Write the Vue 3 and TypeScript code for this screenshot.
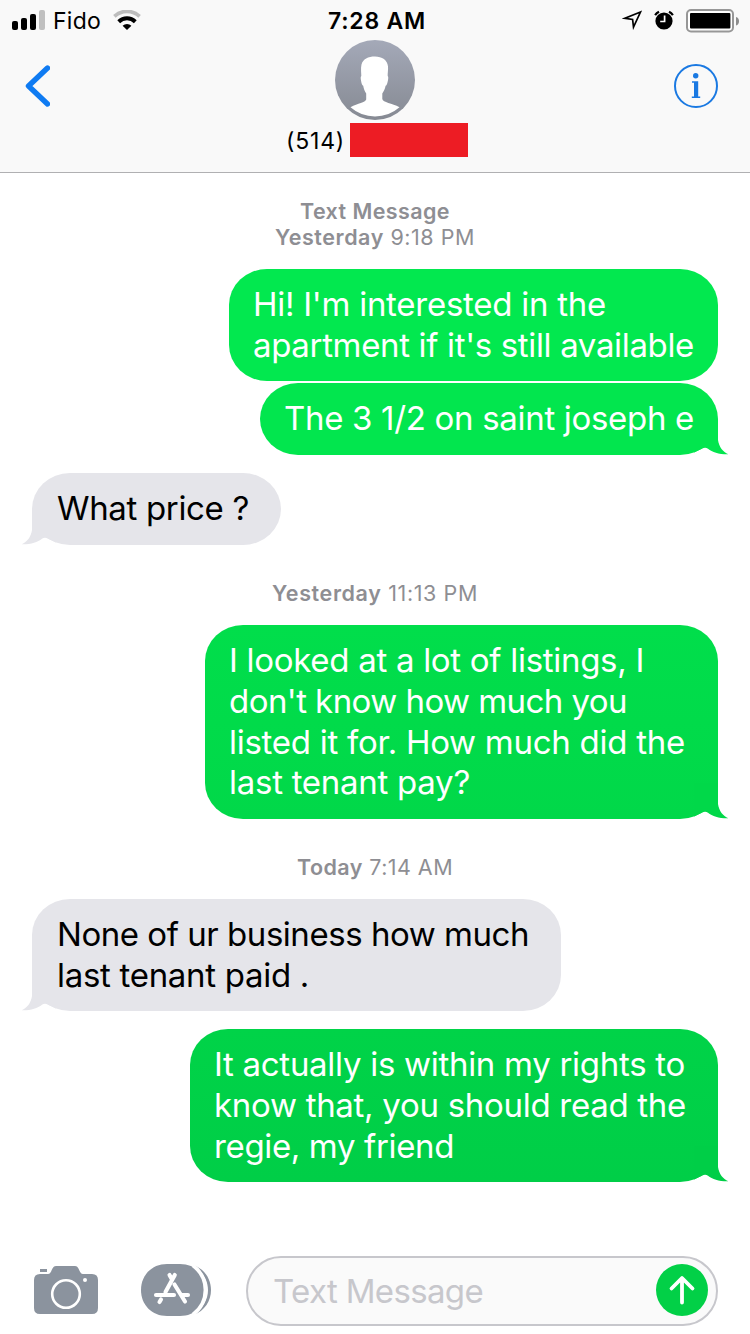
<script setup lang="ts">
interface Line {
  text: string
  width: number
}

interface Bubble {
  id: string
  kind: 'sent' | 'received'
  tail: boolean
  lines: Line[]
}

interface Group {
  id: string
  stamp: { label?: string; day: string; time: string; width: number }
  bubbles: Bubble[]
}

const groups: Group[] = [
  {
    id: 'first',
    stamp: { label: 'Text Message', day: 'Yesterday', time: '9:18 PM', width: 200 },
    bubbles: [
      {
        id: 'hello',
        kind: 'sent',
        tail: false,
        lines: [
          { text: "Hi! I'm interested in the", width: 353 },
          { text: "apartment if it's still available", width: 441 },
        ],
      },
      {
        id: 'street',
        kind: 'sent',
        tail: true,
        lines: [{ text: 'The 3 1/2 on saint joseph e', width: 410 }],
      },
      {
        id: 'price',
        kind: 'received',
        tail: true,
        lines: [{ text: 'What price ?', width: 192 }],
      },
    ],
  },
  {
    id: 'second',
    stamp: { day: 'Yesterday', time: '11:13 PM', width: 206 },
    bubbles: [
      {
        id: 'listings',
        kind: 'sent',
        tail: true,
        lines: [
          { text: 'I looked at a lot of listings, I', width: 415 },
          { text: "don't know how much you", width: 398 },
          { text: 'listed it for. How much did the', width: 456 },
          { text: 'last tenant pay?', width: 241 },
        ],
      },
    ],
  },
  {
    id: 'third',
    stamp: { day: 'Today', time: '7:14 AM', width: 156 },
    bubbles: [
      {
        id: 'business',
        kind: 'received',
        tail: true,
        lines: [
          { text: 'None of ur business how much', width: 472 },
          { text: 'last tenant paid .', width: 252 },
        ],
      },
      {
        id: 'rights',
        kind: 'sent',
        tail: true,
        lines: [
          { text: 'It actually is within my rights to', width: 471 },
          { text: 'know that, you should read the', width: 472 },
          { text: 'regie, my friend', width: 240 },
        ],
      },
    ],
  },
]

// Tracks a single line of text so that it spans the given width.
const vFit = {
  mounted(el: HTMLElement, binding: { value: number }) {
    const natural = el.getBoundingClientRect().width
    const count = (el.textContent ?? '').length
    if (count > 0) {
      el.style.letterSpacing = `${((binding.value - natural) / count).toFixed(3)}px`
    }
  },
}
</script>

<template>
  <main class="phone">
    <header class="top">
      <div class="status">
        <div class="carrier">
          <svg class="signal" width="34" height="20" viewBox="0 0 34 20">
            <rect x="0" y="11" width="6" height="9" rx="2" />
            <rect x="9" y="8" width="6" height="12" rx="2" />
            <rect x="18" y="4" width="6" height="16" rx="2" />
            <rect x="27" y="0" width="6" height="20" rx="2" fill="#bfbfbf" />
          </svg>
          <span v-fit="48" class="fido">Fido</span>
          <svg class="wifi" width="28" height="20" viewBox="0 0 28 20">
            <path d="M1.4 6.4A18.2 18.2 0 0 1 26.6 6.4" fill="none" stroke="#bdbdbd" stroke-width="3.6" />
            <path d="M5.700 11.700A12 12 0 0 1 22.300 11.700" fill="none" stroke="#000" stroke-width="4" />
            <path d="M9.600 15.700A6.800 6.800 0 0 1 18.400 15.700L14 20Z" />
          </svg>
        </div>
        <span v-fit="98" class="clock">7:28 AM</span>
        <div class="indicators">
          <svg width="20" height="20" viewBox="0 0 20 20">
            <path d="M18.500 2L3 8.300L10.600 9.500L11.500 17.100Z" fill="none" stroke="#000" stroke-width="1.7" />
          </svg>
          <svg class="alarm" width="20" height="20" viewBox="0 0 20 20">
            <circle cx="10" cy="11" r="8.6" />
            <path d="M1.1 5.1A11 11 0 0 1 5 1.7M18.9 5.1A11 11 0 0 0 15 1.7" fill="none" stroke="#000" stroke-width="2.2" />
            <path d="M10.6 5.4V11.5H6.2" fill="none" stroke="#fff" stroke-width="1.7" />
          </svg>
          <svg class="battery" width="54" height="24" viewBox="0 0 54 24">
            <rect x="1" y="1" width="46" height="21.5" rx="4" fill="#fff" stroke="#979797" stroke-width="2" />
            <rect x="4" y="4" width="40.4" height="15.4" rx="1" />
            <path d="M50 8C54 9 54 15.500 50 16.500Z" fill="#8d8d8d" />
          </svg>
        </div>
      </div>
      <nav class="contact">
        <svg class="back" width="26" height="44" viewBox="0 0 26 44">
          <path d="M23.500 4L4.500 22L23.500 40" fill="none" stroke="#0f7bf2" stroke-width="5.4" stroke-linecap="round" stroke-linejoin="round" />
        </svg>
        <div class="person">
          <svg width="80" height="80" viewBox="0 0 80 80">
            <defs>
              <linearGradient id="avatar-shade" x1="0" y1="0" x2="0" y2="1">
                <stop offset="0" stop-color="#a4a9b8" />
                <stop offset="1" stop-color="#868a93" />
              </linearGradient>
            </defs>
            <circle cx="40" cy="40" r="40" fill="url(#avatar-shade)" />
            <path
              d="M40 16.500C47 16.500 52.500 20 53 26.500C53.300 30 52.500 33.500 52.700 36C53.600 36.500 53.300 39 52.700 41.500C52.200 44 51.500 45.600 50.600 45.800C50 49 48.800 51.500 47.300 53.500V59C48 62.500 57 63.300 64.500 67.200Q54 76.400 40 76.400Q26 76.400 15.500 67.200C23 63.300 30.200 62.500 31.200 59.500V53.500C29.700 51.500 28.800 49 28.200 45.800C27.200 45.500 26.500 43.500 26.100 41C25.600 38.500 25.500 36.500 26.300 36C26.300 33 25.600 28.500 26.500 24.500C28 19 33 16.500 40 16.500Z"
              fill="#fff"
            />
          </svg>
          <div class="number">
            <span v-fit="59" class="area">(514)</span>
            <span class="redacted"></span>
          </div>
        </div>
        <svg class="info" width="44" height="44" viewBox="0 0 44 44">
          <circle cx="22" cy="22" r="21" fill="none" stroke="#1a79e2" stroke-width="2" />
          <circle cx="21.700" cy="11.700" r="2.700" fill="#1a79e2" />
          <path d="M18 17.200H24.200V32.500H26.200V34H17.800V32.500H20V18.700H18Z" fill="#1a79e2" />
        </svg>
      </nav>
    </header>

    <section class="chat">
      <template v-for="group in groups" :key="group.id">
        <div class="stamp" :class="'stamp-' + group.id">
          <b v-if="group.stamp.label" v-fit="150">{{ group.stamp.label }}</b>
          <span v-fit="group.stamp.width"><b>{{ group.stamp.day }}</b> {{ group.stamp.time }}</span>
        </div>
        <div
          v-for="bubble in group.bubbles"
          :key="bubble.id"
          class="bubble"
          :class="[bubble.kind, bubble.id]"
        >
          <span v-for="line in bubble.lines" :key="line.text" class="line">
            <span v-fit="line.width" class="words">{{ line.text }}</span>
          </span>
          <svg v-if="bubble.tail" class="tail" width="40" height="36" viewBox="0 0 40 36">
            <path d="M29 0V21C30 28 34 33 39.300 35.300C30 35.500 23.500 33 19 29.700Q16 28 13 29.800L5 33.600V0Z" />
          </svg>
        </div>
      </template>
    </section>

    <footer class="composer">
      <svg class="camera" width="64" height="48" viewBox="0 0 64 48">
        <path d="M6 3H13V6H6Z" />
        <path d="M6 8H14C18 8 17.500 0 22 0H41C45.500 0 45 8 49 8H58Q64 8 64 14V42Q64 48 58 48H6Q0 48 0 42V14Q0 8 6 8Z" />
        <circle cx="32" cy="28" r="13.800" fill="none" stroke="#fff" stroke-width="2.600" />
        <circle cx="51" cy="14" r="2" fill="#fff" />
      </svg>
      <svg class="apps" width="70" height="52" viewBox="0 0 70 52">
        <path d="M52 1C76 9 76 43 52 51C72 38 72 14 52 1Z" />
        <path d="M26 0H39C54 0 65 11 65 26S54 52 39 52H26C11 52 0 41 0 26S11 0 26 0Z" />
        <path d="M52 1.500C68.500 14 68.500 38 52 50.500" fill="none" stroke="#fff" stroke-width="3.600" />
        <path d="M33.800 11L24.500 28M28.500 11L31 15.500M33.500 20.500L44 37.500M15 31H33M41 31H47M20 35.500L18.500 38" fill="none" stroke="#fff" stroke-width="4.100" stroke-linecap="round" />
      </svg>
      <div class="field">
        <span v-fit="210" class="placeholder">Text Message</span>
        <svg class="send" width="52" height="52" viewBox="0 0 52 52">
          <circle cx="26" cy="26" r="26" fill="#02d047" />
          <path d="M26 38.500V14.500M15.500 24.500L26 14L36.500 24.500" fill="none" stroke="#fff" stroke-width="3.800" stroke-linecap="round" stroke-linejoin="round" />
        </svg>
      </div>
    </footer>
  </main>
</template>

<style>
body {
  margin: 0;
  background: #fff;
}
</style>

<style scoped>
.phone {
  display: flex;
  flex-direction: column;
  width: 750px;
  height: 1334px;
  overflow: hidden;
  background: #fff;
  color: #000;
  font-family: Inter, "Liberation Sans", sans-serif;
  white-space: nowrap;
}

svg {
  display: block;
  flex: none;
}

.top {
  box-sizing: border-box;
  height: 173px;
  flex: none;
  background: #f9f9f9;
  border-bottom: 1px solid #b0b0b2;
}

.status {
  display: grid;
  grid-template-columns: 1fr auto 1fr;
  align-items: center;
  height: 40px;
  padding: 0 10px 0 12px;
}

.carrier {
  display: flex;
  align-items: center;
}

.fido {
  margin-left: 7px;
  font-size: 23px;
  line-height: 38px;
  padding-top: 2px;
}

.wifi {
  margin-left: 12px;
}

.clock {
  margin-left: 2px;
  font-size: 23px;
  font-weight: 600;
  line-height: 38px;
  padding-top: 2px;
}

.indicators {
  display: flex;
  align-items: center;
  justify-content: flex-end;
}

.alarm {
  margin-left: 12px;
}

.battery {
  margin: 1px 0 0 12px;
}

.contact {
  display: grid;
  grid-template-columns: 1fr auto 1fr;
  align-items: start;
  padding: 0 32px 0 24px;
}

.back {
  margin-top: 24px;
}

.person {
  display: flex;
  flex-direction: column;
  align-items: center;
  width: 182px;
  margin-left: 8px;
}

.number {
  display: flex;
  align-items: center;
  justify-content: space-between;
  width: 182px;
  height: 34px;
  margin: 3px 0 0 4px;
  font-size: 23px;
}

.area {
  padding-top: 2px;
}

.redacted {
  width: 118px;
  height: 34px;
  background: #ed1c24;
}

.info {
  justify-self: end;
  margin-top: 24px;
}

.chat {
  display: flex;
  flex-direction: column;
  flex: 1;
  padding: 0 32px;
}

.stamp {
  display: flex;
  flex-direction: column;
  align-items: center;
  color: #8e8e93;
  font-size: 21.5px;
  line-height: 26px;
}

.stamp b {
  font-weight: 600;
}

.stamp-first {
  margin: 25px 0 19px;
}

.stamp-second {
  margin: 35px 0 19px;
}

.stamp-third {
  margin: 35px 0 19px;
}

.bubble {
  position: relative;
  box-sizing: border-box;
  padding: 15px 24px 0;
  border-radius: 38px / 36px;
  font-size: 33px;
  line-height: 40.8px;
}

.line {
  display: block;
}

.words {
  display: inline-block;
}

.sent {
  align-self: flex-end;
  color: #fff;
  font-weight: 400;
}

.received {
  align-self: flex-start;
  padding-left: 25px;
  background: #e5e5ea;
}

.tail {
  position: absolute;
  right: -11px;
  bottom: 0;
}

.received .tail {
  right: auto;
  left: -11px;
  transform: scaleX(-1);
  fill: #e5e5ea;
}

.hello {
  width: 489px;
  height: 112px;
  background: #02e84f;
}

.street {
  width: 458px;
  height: 72px;
  margin-top: 2px;
  background: #02e64e;
  fill: #02e64e;
}

.price {
  width: 249px;
  height: 72px;
  margin-top: 18px;
}

.listings {
  width: 513px;
  height: 194px;
  background: linear-gradient(#01de4b, #01d849);
  fill: #01d849;
}

.business {
  width: 529px;
  height: 112px;
}

.rights {
  width: 528px;
  height: 153px;
  margin-top: 18px;
  background: linear-gradient(#00d348, #00ce47);
  fill: #00ce47;
}

.composer {
  display: flex;
  align-items: center;
  height: 70px;
  padding: 0 32px 8px 34px;
  fill: #8b939e;
}

.camera {
  margin-bottom: 2px;
}

.apps {
  margin: 0 0 2px 43px;
}

.field {
  display: flex;
  align-items: center;
  justify-content: space-between;
  box-sizing: border-box;
  width: 472px;
  height: 70px;
  margin-left: auto;
  padding: 0 8px 0 25px;
  border: 2px solid #c7c7cc;
  border-radius: 35px;
  background: #fafafa;
}

.send {
  margin-bottom: 2px;
}

.placeholder {
  color: #c7c7cc;
  font-size: 33px;
  font-weight: 400;
}
</style>
